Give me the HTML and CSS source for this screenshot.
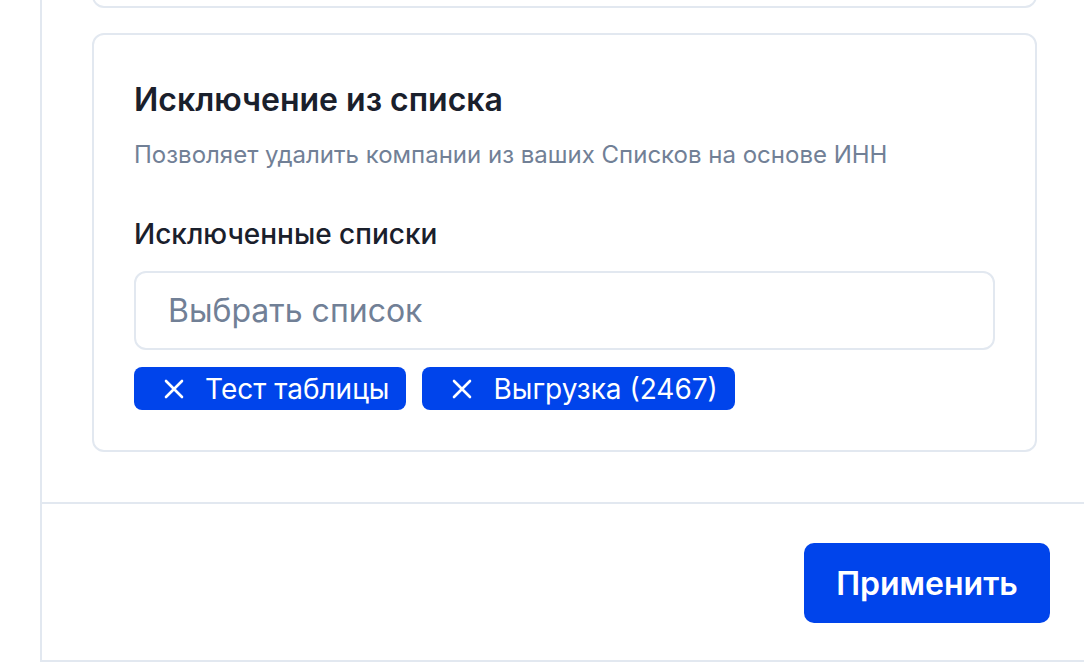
FILE: index.html
```html
<!DOCTYPE html>
<html lang="ru">
<head>
<meta charset="utf-8">
<link rel="stylesheet" href="styles.css">
</head>
<body>
<div class="panel">
  <div class="content">
    <div class="card card-prev"></div>
    <div class="card">
      <h2 class="card-title">Исключение из списка</h2>
      <p class="card-desc">Позволяет удалить компании из ваших Списков на основе ИНН</p>
      <div class="field-label">Исключенные списки</div>
      <div class="select">Выбрать список</div>
      <div class="chips">
        <span class="chip">
          <svg class="chip-x" viewBox="0 0 20 20" width="20" height="20"><path d="M2 2L18 18M18 2L2 18" stroke="#fff" stroke-width="2.6" stroke-linecap="round" fill="none"/></svg>
          <span>Тест таблицы</span>
        </span>
        <span class="chip">
          <svg class="chip-x" viewBox="0 0 20 20" width="20" height="20"><path d="M2 2L18 18M18 2L2 18" stroke="#fff" stroke-width="2.6" stroke-linecap="round" fill="none"/></svg>
          <span>Выгрузка (2467)</span>
        </span>
      </div>
    </div>
  </div>
  <div class="footer">
    <button class="btn-apply">Применить</button>
  </div>
</div>
</body>
</html>
```
FILE: styles.css
```css
* { box-sizing: border-box; }
html, body { margin: 0; padding: 0; background: #fff; overflow: hidden; }
body { font-family: Inter, "Noto Sans", sans-serif; color: #1a202c; }

.panel {
  margin-left: 40px;
  width: 1044px;
  height: 662px;
  border-left: 2px solid #e2e8f0;
  border-bottom: 2px solid #e2e8f0;
  display: flex;
  flex-direction: column;
}

.content {
  padding: 0 47px 50px 50px;
  display: flex;
  flex-direction: column;
  gap: 25px;
}

.card {
  border: 2px solid #e2e8f0;
  border-radius: 12px;
  padding: 40px;
}

.card-prev {
  height: 100px;
  margin-top: -92px;
}

.card-title {
  margin: 5px 0 0;
  font-size: 32px;
  font-weight: 600;
  line-height: 40px;
  color: #1a202c;
}

.card-desc {
  margin: 19px 0 0;
  font-size: 24px;
  line-height: 32px;
  color: #718096;
}

.field-label {
  margin-top: 45px;
  font-size: 28px;
  font-weight: 500;
  line-height: 36px;
  color: #1a202c;
}

.select {
  margin-top: 19px;
  height: 79px;
  border: 2px solid #e2e8f0;
  border-radius: 12px;
  padding: 0 32px;
  display: flex;
  align-items: center;
  font-size: 32px;
  color: #718096;
}

.chips {
  margin-top: 17px;
  display: flex;
  gap: 16px;
}

.chip {
  height: 43px;
  background: #0044eb;
  color: #fff;
  border-radius: 8px;
  padding: 0 17px 0 30px;
  display: inline-flex;
  align-items: center;
  gap: 21px;
  font-size: 28px;
  line-height: 1;
}

.chip-x { flex: none; }

.footer {
  border-top: 2px solid #e2e8f0;
  flex: 1;
  display: flex;
  justify-content: flex-end;
  align-items: flex-start;
  padding: 39px 34px 0 0;
}

.btn-apply {
  width: 246px;
  height: 80px;
  border: none;
  border-radius: 10px;
  background: #0044eb;
  color: #fff;
  font-family: Inter, "Noto Sans", sans-serif;
  font-size: 32px;
  font-weight: 600;
}
```
